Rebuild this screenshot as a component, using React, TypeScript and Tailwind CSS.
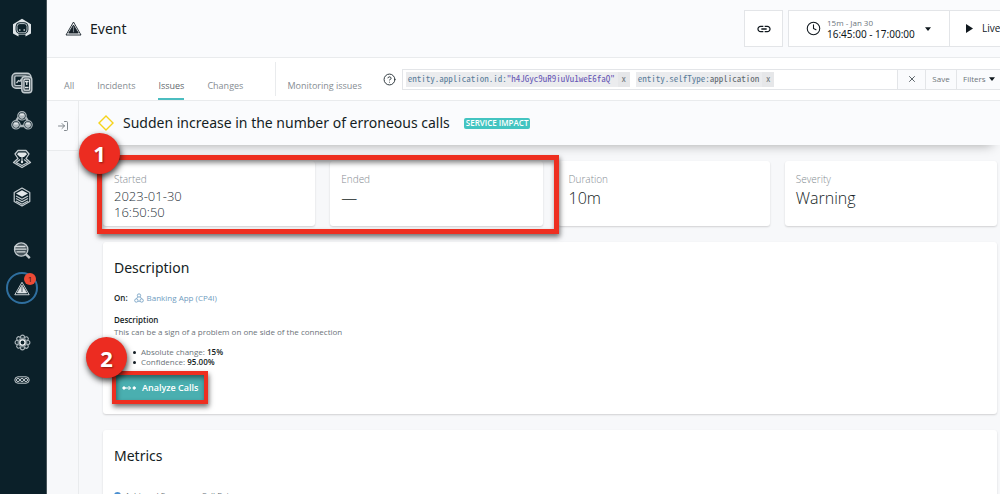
import React from "react";
import { LogIn, Clock, CircleHelp, X } from "lucide-react";

const hex = (cx: number, cy: number, r: number) =>
  [0, 1, 2, 3, 4, 5]
    .map((i) => {
      const a = (Math.PI / 3) * i - Math.PI / 2;
      return `${(cx + r * Math.cos(a)).toFixed(2)},${(cy + r * Math.sin(a)).toFixed(2)}`;
    })
    .join(" ");

function LogoIcon() {
  return (
    <svg viewBox="0 0 20 20" className="size-5">
      <path d="M6.500 18.600 1 15.500V6.200L10 .8 19 6.200v9.300l-5.500 3.100V16.500h-7z" fill="#dfe5e8" />
      <rect x="3.600" y="4.300" width="12.800" height="11.800" rx="4.500" fill="#0b2029" />
      <rect x="5" y="5.600" width="10" height="9.200" rx="2.800" fill="none" stroke="#b9c3c8" strokeWidth="1" />
      <circle cx="7.800" cy="12" r="0.8" fill="#fff" />
      <circle cx="12.200" cy="12" r="0.8" fill="#fff" />
    </svg>
  );
}

function DashboardIcon() {
  return (
    <svg viewBox="0 0 22 22" className="size-[22px]" fill="none" stroke="#c3cbcf">
      <rect x="1" y="1.200" width="19" height="15" rx="4" fill="#56646b" strokeWidth="1.400" />
      <rect x="3.800" y="4" width="12" height="9.500" rx="1" fill="#0b2029" strokeWidth="1.200" />
      <path d="M5.500 11l2-2.500 1.500.8 1.500-2.500" strokeWidth="1.300" />
      <rect x="10.800" y="4.800" width="10" height="16" rx="3" fill="#56646b" strokeWidth="1.400" />
      <rect x="13" y="7.200" width="5.600" height="11" rx="1" fill="#0b2029" stroke="#dfe4e6" strokeWidth="1.200" />
      <path d="M14 9.500h3.600M15.800 9.500v3.500M14 15.500h3.600" stroke="#dfe4e6" strokeWidth="1.300" />
    </svg>
  );
}

function AppsIcon() {
  return (
    <svg viewBox="0 0 22 20" className="h-5 w-[22px]" fill="none" stroke="#aab4b9">
      <path d="M7.500 6 4.500 11M14.500 6l3 5M8 15h6" strokeWidth="2.400" />
      {[[11, 4.8], [5, 13.8], [17, 13.8]].map(([x, y]) => (
        <g key={`${x}-${y}`}>
          <circle cx={x} cy={y} r="4.200" fill="#0b2029" strokeWidth="1.200" />
          <circle cx={x} cy={y} r="2.600" fill="#aab4b9" stroke="#c3cbcf" strokeWidth="0.8" />
          <path d={`M${x - 1.8} ${y - 1}h3.600`} stroke="#eef1f2" strokeWidth="1.200" />
        </g>
      ))}
    </svg>
  );
}

function PlatformIcon() {
  return (
    <svg viewBox="0 0 20 20" className="size-5" fill="none" stroke="#c3cbcf" strokeLinejoin="round">
      <path d="M6 1.500h8L17 5l-3 4.500 4.500 4L10 18.500 1.500 13.500l4.500-4L3 5z" strokeWidth="1.300" />
      <path d="M6.500 3.600h7L15 5.300 12 8H8L5 5.300z" fill="#e2e7e9" stroke="none" />
      <path d="M10 8v5.500M8 10.500l-4 3 6 3 6-3-4-3" strokeWidth="1.200" />
      <circle cx="10" cy="13" r="1.200" fill="#e2e7e9" stroke="none" />
    </svg>
  );
}

function StackIcon() {
  return (
    <svg viewBox="0 0 20 20" className="size-5" fill="none" stroke="#c3cbcf" strokeLinejoin="round">
      <polygon points={hex(10, 10, 9)} strokeWidth="1.200" />
      <path d="M10 3.200 16 6.500 10 9.800 4 6.500z" fill="#e2e7e9" stroke="none" />
      <path d="M4 9l6 3.200L16 9M4 11.500l6 3.200 6-3.200M4 14l6 3.200 6-3.200" strokeWidth="1.200" />
    </svg>
  );
}

function AnalyzeIcon() {
  return (
    <svg viewBox="0 0 20 20" className="size-5" fill="none" stroke="#c3cbcf">
      <circle cx="9.200" cy="8.500" r="6.700" fill="#46545b" strokeWidth="1.300" />
      <path d="M2.500 5.500h11M3 8.200h11.500M4.500 10.900h9" stroke="#d5dbde" strokeWidth="1.300" />
      <path d="m13.800 13.100 4 4" strokeWidth="2.400" />
    </svg>
  );
}

function WarningIcon({ tone, core, className }: { tone: string; core: string; className: string }) {
  return (
    <svg viewBox="0 0 20 18" className={className} fill="none" strokeLinejoin="round">
      <path d="M10 1.200 19 16.800H1z" stroke={tone} strokeWidth="1.100" />
      <path d="M10 4.800 15.800 14.500H4.200z" fill={tone} stroke={tone} strokeWidth="1" />
      <path d="M10 6.500v7" stroke={core} strokeWidth="1.300" />
    </svg>
  );
}

function GearIcon() {
  return (
    <svg viewBox="0 0 20 20" className="size-[17px]" fill="none" stroke="#aeb8bd">
      {[0, 45, 90, 135, 180, 225, 270, 315].map((a) => (
        <circle key={a} cx="10" cy="3.600" r="2.300" strokeWidth="1.300" transform={`rotate(${a} 10 10)`} />
      ))}
      <circle cx="10" cy="10" r="5.800" fill="#7d8a90" stroke="none" />
      <circle cx="10" cy="10" r="3" fill="#0b2029" stroke="#f0f3f4" strokeWidth="1.500" />
    </svg>
  );
}

function MoreIcon() {
  return (
    <svg viewBox="0 0 16 10" className="h-[10px] w-4" fill="none" stroke="#c3cbcf">
      <rect x="0.800" y="1.800" width="14.400" height="6.400" rx="3.200" strokeWidth="1" />
      {[4, 8, 12].map((x) => (
        <circle key={x} cx={x} cy="5" r="1.600" strokeWidth="1" />
      ))}
    </svg>
  );
}

function LinkIcon() {
  return (
    <svg viewBox="0 0 24 24" className="size-4" fill="#10181e">
      <path d="M3.900 12c0-1.710 1.390-3.100 3.100-3.100h4V7H7c-2.760 0-5 2.240-5 5s2.240 5 5 5h4v-1.900H7c-1.710 0-3.100-1.390-3.100-3.100zM8 13h8v-2H8v2zm9-6h-4v1.900h4c1.710 0 3.100 1.390 3.100 3.100s-1.390 3.100-3.100 3.100h-4V17h4c2.760 0 5-2.240 5-5s-2.240-5-5-5z" />
    </svg>
  );
}

function Caret() {
  return (
    <svg viewBox="0 0 8 5" className="h-1 w-[6px]" fill="#10181e">
      <path d="M0 0h8L4 5z" />
    </svg>
  );
}

function NavButton({ label, className, children }: { label: string; className: string; children: React.ReactNode }) {
  return (
    <button type="button" aria-label={label} className={`relative flex w-full items-center justify-center ${className}`}>
      {children}
    </button>
  );
}

function Sidebar() {
  return (
    <nav className="flex w-[47px] shrink-0 flex-col border-r border-[#47545a] bg-[#0b2029] pr-0.5">
      <NavButton label="Home" className="mt-2 h-10"><LogoIcon /></NavButton>
      <NavButton label="Dashboards" className="mt-4 h-[38px]"><DashboardIcon /></NavButton>
      <NavButton label="Applications" className="h-[38px]"><AppsIcon /></NavButton>
      <NavButton label="Platforms" className="h-[38px]"><PlatformIcon /></NavButton>
      <NavButton label="Infrastructure" className="h-[38px]"><StackIcon /></NavButton>
      <NavButton label="Analytics" className="mt-4 h-[37px]"><AnalyzeIcon /></NavButton>
      <NavButton label="Events" className="h-[38px]">
        <span className="flex size-8 items-center justify-center rounded-full border-2 border-[#2f6f9f]">
          <WarningIcon tone="#dfe4e6" core="#56636a" className="h-[15px] w-4" />
        </span>
        <span className="absolute top-1 right-2 flex size-3 items-center justify-center rounded-full bg-[#ee4a35] text-[8px] leading-none text-[#3a1210]">1</span>
      </NavButton>
      <NavButton label="Settings" className="mt-4 h-[38px]"><GearIcon /></NavButton>
      <NavButton label="More" className="h-[38px]"><MoreIcon /></NavButton>
    </nav>
  );
}

function Header() {
  return (
    <header className="flex h-[58px] shrink-0 items-center border-b border-[#e9ebed] bg-[#fafbfd] pl-[18px]">
      <WarningIcon tone="#17222a" core="#77818a" className="h-[15px] w-[17px]" />
      <h1 className="ml-2 font-['Noto_Sans',sans-serif] text-sm text-[#151c22]">Event</h1>
      <div className="ml-auto flex h-[37px] shrink-0 gap-[5px]">
        <button type="button" aria-label="Copy link" className="flex w-[39px] items-center justify-center border border-[#e3e5e8] bg-white">
          <LinkIcon />
        </button>
        <div className="flex border border-r-0 border-[#e3e5e8] bg-white">
          <button type="button" className="flex w-40 items-center pl-[17px] text-left">
            <Clock className="size-[15px]" color="#10181e" strokeWidth={1.7} />
            <span className="ml-[6px] flex flex-col">
              <span className="text-[8px] leading-[10px] text-[#6d757b]">15m - Jan 30</span>
              <span className="font-['Noto_Sans',sans-serif] text-[10px] leading-3 whitespace-nowrap text-[#10181e]">16:45:00 - 17:00:00</span>
            </span>
            <span className="ml-[10px]"><Caret /></span>
          </button>
          <button type="button" className="flex w-[51px] items-center overflow-hidden border-l border-[#e3e5e8] pl-4">
            <svg viewBox="0 0 7 9" className="h-[9px] w-[7px] shrink-0" fill="#10181e"><path d="M0 0v9l7-4.500z" /></svg>
            <span className="ml-[9px] text-[10px] whitespace-nowrap text-[#10181e]">Live</span>
          </button>
        </div>
      </div>
    </header>
  );
}

function Tab({ label, active = false }: { label: string; active?: boolean }) {
  return (
    <a
      href="#"
      aria-current={active ? "page" : undefined}
      className={`flex h-[26px] items-center border-b-2 text-[9px] whitespace-nowrap ${active ? "border-[#4bbdc0] text-[#5f676d]" : "border-transparent text-[#858c92]"}`}
    >
      {label}
    </a>
  );
}

function Chip({ name, value, quoted = false }: { name: string; value: string; quoted?: boolean }) {
  return (
    <span className="flex h-[15px] items-center bg-[#ebecee] font-['Noto_Sans_Mono_CJK_SC','DejaVu_Sans_Mono',monospace] text-[9px] whitespace-nowrap">
      <span className="px-[2px] text-[#5a7d9a]">
        {name}:<span className={quoted ? "text-[#6656b5]" : "text-[#60676d]"}>{value}</span>
      </span>
      <button type="button" aria-label={`Remove ${name}`} className="ml-px flex h-full w-3 items-center justify-center bg-[#e6e7e9] text-[#70777c]">x</button>
    </span>
  );
}

function TabBar() {
  return (
    <div className="flex h-[43px] shrink-0 border-b border-[#e9ebed] bg-white pl-[17px]">
      <div className="flex items-end gap-[23px]">
        <Tab label="All" />
        <Tab label="Incidents" />
        <Tab label="Issues" active />
        <Tab label="Changes" />
      </div>
      <div className="mt-1 ml-8 h-[34px] border-l border-[#e9ebed]" />
      <div className="ml-[11px] flex items-end"><Tab label="Monitoring issues" /></div>
      <div className="ml-[21px] flex min-w-0 flex-1 items-center">
        <button type="button" aria-label="Help" className="mr-[6px]"><CircleHelp className="size-[13px]" color="#2b353b" strokeWidth={1.8} /></button>
        <div className="flex h-[21px] min-w-0 flex-1 border border-r-0 border-[#e3e5e8]">
          <div className="flex min-w-0 flex-1 items-center gap-[6px] pl-[3px]">
            <Chip name="entity.application.id" value={'"h4JGyc9uR9iuVu1weE6faQ"'} quoted />
            <Chip name="entity.selfType" value="application" />
            <input aria-label="Filter query" className="min-w-0 flex-1 bg-transparent text-[9px] outline-none" />
          </div>
          <button type="button" aria-label="Clear" className="flex w-7 items-center justify-center border-l border-[#e3e5e8] bg-[#fafbfd]"><X className="size-[10px]" color="#3c464c" /></button>
          <button type="button" className="w-[31px] border-l border-[#e3e5e8] bg-[#fafbfd] text-[8px] text-[#6d757b]">Save</button>
          <button type="button" className="flex w-11 items-center gap-[3px] border-l border-[#e3e5e8] bg-[#fafbfd] pl-[6px] text-[8px] text-[#6d757b]">Filters <Caret /></button>
        </div>
      </div>
    </div>
  );
}

function Stat({ label, children, compact = false }: { label: string; children: React.ReactNode; compact?: boolean }) {
  return (
    <div className="h-[65px] rounded-[3px] bg-white px-[11px] pt-[11px] shadow-[0_1px_2px_rgba(0,0,0,0.16)]">
      <div className="text-[10px] leading-[14px] font-light text-[#858c92]">{label}</div>
      <div className={compact ? "mt-[2px] text-[13px] leading-4 font-light text-[#28323a]" : "mt-[2px] text-base leading-5 font-light text-[#141d24]"}>{children}</div>
    </div>
  );
}

function Marker({ n, className }: { n: number; className: string }) {
  return (
    <span className={`absolute z-20 flex size-[41px] items-center justify-center rounded-full bg-[#ec2c21] text-[22px] font-bold text-white shadow-[1px_3px_6px_rgba(0,0,0,0.75)] text-shadow-[1px_1px_2px_rgba(0,0,0,0.4)] ${className}`}>
      {n}
    </span>
  );
}

function Frame({ className }: { className: string }) {
  return (
    <span className={`pointer-events-none absolute z-10 border-[#ee2f20] shadow-[1px_3px_5px_rgba(0,0,0,0.55),inset_1px_3px_5px_rgba(0,0,0,0.45)] ${className}`} />
  );
}

function Bullet({ label, value }: { label: string; value: string }) {
  return (
    <li className="flex items-center">
      <span className="mr-[5px] size-[3px] rounded-full bg-[#141d24]" />
      <span>{label}: <b className="font-semibold text-[#141d24]">{value}</b></span>
    </li>
  );
}

function Content() {
  return (
    <main className="flex min-w-0 flex-1 flex-col">
      <div className="z-[1] flex h-11 shrink-0 items-center bg-[#fafbfd] pl-[19px] shadow-[0_8px_12px_-8px_rgba(0,0,0,0.35)]">
        <svg viewBox="0 0 16 16" className="size-4" fill="none" stroke="#f6d31b" strokeWidth="1.400"><path d="M8 1l7 7-7 7-7-7z" /></svg>
        <h2 className="ml-[9px] font-['Noto_Sans',sans-serif] text-sm whitespace-nowrap text-[#141d24]">Sudden increase in the number of erroneous calls</h2>
        <span className="ml-[14px] flex h-[11px] items-center rounded-[2px] bg-[#43c4c1] px-[2px] text-[8px] leading-none font-semibold whitespace-nowrap text-white">SERVICE IMPACT</span>
      </div>
      <div className="flex min-h-0 flex-1 flex-col gap-4 overflow-visible pt-4 pr-[3px] pl-6">
        <div className="z-[2] grid shrink-0 grid-cols-4 gap-[15px]">
          <div className="relative col-span-2 grid grid-cols-2 gap-[15px]">
            <Stat label="Started" compact>2023-01-30<br />16:50:50</Stat>
            <Stat label="Ended">—</Stat>
            <Frame className="-top-[6px] -right-4 -bottom-[8px] -left-[6px] border-[5px]" />
            <Marker n={1} className="-top-[28px] -left-6" />
          </div>
          <Stat label="Duration">10m</Stat>
          <Stat label="Severity">Warning</Stat>
        </div>
        <section className="h-[172px] shrink-0 rounded-[3px] bg-white px-[11px] pt-4 text-[8px] leading-3 text-[#6b7379] shadow-[0_1px_2px_rgba(0,0,0,0.16)]">
          <h3 className="font-['Noto_Sans',sans-serif] text-sm leading-5 text-[#141d24]">Description</h3>
          <div className="mt-[14px] flex items-center">
            <b className="font-semibold text-[#141d24]">On:</b>
            <a href="#" className="ml-[6px] flex items-center gap-[3px] text-[#6f9cc0]">
              <svg viewBox="0 0 12 12" className="size-[10px]" fill="none" stroke="#6f9cc0">
                <circle cx="6" cy="3" r="2" /><circle cx="2.800" cy="9" r="2" /><circle cx="9.200" cy="9" r="2" /><path d="M4.500 4.500 3 7M7.500 4.500 9 7M5 10h2" />
              </svg>
              Banking App (CP4I)
            </a>
          </div>
          <b className="mt-[10px] block font-semibold text-[#141d24]">Description</b>
          <p>This can be a sign of a problem on one side of the connection</p>
          <ul className="mt-[9px] pl-[19px] leading-[10px]">
            <Bullet label="Absolute change" value="15%" />
            <Bullet label="Confidence" value="95.00%" />
          </ul>
          <div className="relative mt-2 ml-[2px] w-[88px]">
            <button type="button" className="flex h-[25px] w-full items-center gap-[6px] bg-[#4aafb0] pl-[6px] text-[9px] font-semibold whitespace-nowrap text-white">
              <svg viewBox="0 0 14 6" className="h-[6px] w-[14px] shrink-0" fill="none" stroke="white"><circle cx="2" cy="3" r="1.200" fill="white" /><circle cx="12.200" cy="3" r="1.200" fill="white" /><path d="M3 3h5.500M6.500 1l2 2-2 2" /></svg>
              Analyze Calls
            </button>
            <Frame className="-inset-1 border-4" />
            <Marker n={2} className="-top-[38px] -left-[30px]" />
          </div>
        </section>
        <section className="h-[172px] shrink-0 rounded-[3px] bg-white px-[11px] pt-4 shadow-[0_1px_2px_rgba(0,0,0,0.16)]">
          <h3 className="font-['Noto_Sans',sans-serif] text-sm leading-5 text-[#141d24]">Metrics</h3>
          <p className="mt-[23px] flex items-center gap-1 text-[8px] leading-3 text-[#6b7379]">
            <span className="size-[7px] rounded-full bg-[#4b8fd0]" />Achieved Erroneous Call Rate
          </p>
        </section>
      </div>
    </main>
  );
}

export default function App() {
  return (
    <div className="flex h-screen overflow-hidden bg-[#f7f8fa] font-['Open_Sans','Noto_Sans',sans-serif]">
      <Sidebar />
      <div className="flex min-w-0 flex-1 flex-col">
        <Header />
        <TabBar />
        <div className="flex min-h-0 flex-1">
          <aside className="w-8 shrink-0 border-r border-[#e9ebed]">
            <button type="button" aria-label="Expand panel" className="flex h-[50px] w-full items-center justify-center border-b border-[#e9ebed] bg-[#fafbfd]">
              <LogIn className="size-3" color="#6d757b" strokeWidth={1.7} />
            </button>
          </aside>
          <Content />
        </div>
      </div>
    </div>
  );
}
